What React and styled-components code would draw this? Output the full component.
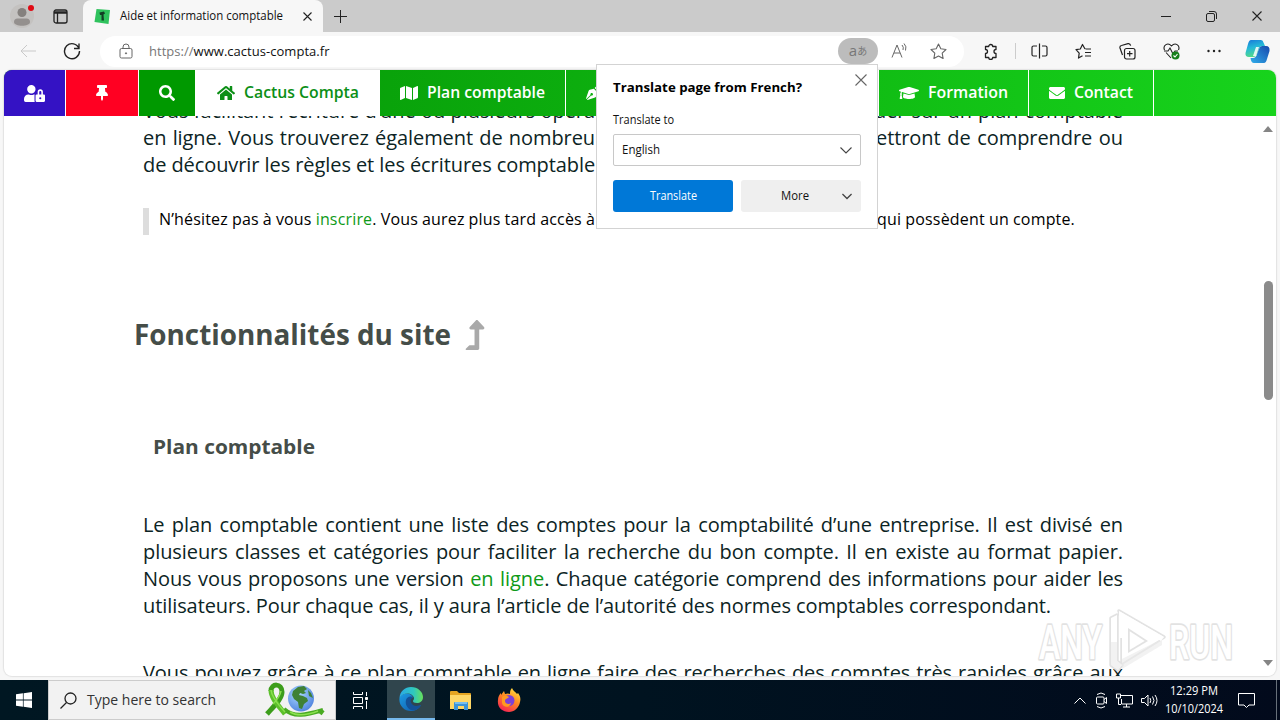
import styled, { createGlobalStyle } from 'styled-components'
import { FaUserLock, FaThumbtack, FaSearch, FaHome, FaMap, FaPenNib, FaGraduationCap, FaEnvelope, FaLevelUpAlt } from 'react-icons/fa'

export default function App() {
    return (
        <Desktop>
            <GlobalStyle />
            <TabStrip>
                <StripButton $width={44}><ProfileIcon /></StripButton>
                <StripButton $width={32}><TabActionsIcon /></StripButton>
                <Tab>
                    <Favicon />
                    <Label $width={163}>Aide et information comptable</Label>
                    <CrossIcon size={9} />
                </Tab>
                <NewTab><Icon w={13} h={13}><path d="M6.500 0v13M0 6.500h13" /></Icon></NewTab>
                <WindowControls>
                    <Icon w={10} h={10}><path d="M0 5.500h10" /></Icon>
                    <Icon w={11} h={11}><rect x=".5" y="2.500" width="8" height="8" rx="1.500" /><path d="M3 .5h5a2.500 2.500 0 0 1 2.500 2.500v5" /></Icon>
                    <CrossIcon size={10} />
                </WindowControls>
            </TabStrip>
            <Toolbar>
                <BackSlot><Icon w={16} h={14} color="#c9c9c9"><path d="M16 7H1M7 1L1 7l6 6" /></Icon></BackSlot>
                <ReloadSlot><Icon w={18} h={18} sw={1.4}><path d="M16 6.500A7.500 7.500 0 1 0 16.500 9M16 1.500v5h-5" /></Icon></ReloadSlot>
                <AddressBar>
                    <Icon w={14} h={16} color="#666"><rect x="1" y="5.500" width="12" height="9.500" rx="1.500" /><path d="M4 5.500V4a3 3 0 0 1 6 0v1.500" /><circle cx="7" cy="10.300" r=".6" fill="#666" /></Icon>
                    <Url><span>https://</span>www.cactus-compta.fr</Url>
                    <TranslatePill><span>a</span><small>あ</small></TranslatePill>
                    <ReadAloud><ReadAloudIcon /></ReadAloud>
                    <StarIcon />
                </AddressBar>
                <Tools>
                    <ExtensionsIcon />
                    <Divider />
                    <SplitIcon />
                    <FavoritesIcon />
                    <CollectionsIcon />
                    <HealthIcon />
                    <Icon w={14} h={4} color="none"><g fill="#222"><circle cx="1.500" cy="2" r="1.200" /><circle cx="7" cy="2" r="1.200" /><circle cx="12.500" cy="2" r="1.200" /></g></Icon>
                    <CopilotIcon />
                </Tools>
            </Toolbar>
            <PageFrame>
                <Page>
                    <SiteNav>
                        <NavItem $width={61} $bg="#3412c4"><FaUserLock size={21} /></NavItem>
                        <NavItem $width={72} $bg="#ff0022"><FaThumbtack size={16} /></NavItem>
                        <NavItem $width={56} $bg="#009900" $last><FaSearch size={16} /></NavItem>
                        <NavItem $width={185} $active $last><FaHome size={18} /><Label $width={115}>Cactus Compta</Label></NavItem>
                        <NavItem $width={185}><FaMap size={18} /><Label $width={118}>Plan comptable</Label></NavItem>
                        <NavItem $width={312} $start><FaPenNib size={14} /></NavItem>
                        <NavItem $width={149}><FaGraduationCap size={20} /><Label $width={80}>Formation</Label></NavItem>
                        <NavItem $width={124}><FaEnvelope size={16} /><Label $width={59}>Contact</Label></NavItem>
                    </SiteNav>
                    <Viewport>
                        <Article>
                            <Intro>
                                <SplitLine>
                                    <Chunk $width={452}>Vous facilitant l’écriture d’une ou plusieurs opéra</Chunk>
                                    <Chunk $width={249}>der sur un plan comptable</Chunk>
                                </SplitLine>
                                <SplitLine>
                                    <Chunk $width={452}>en ligne. Vous trouverez également de nombreu</Chunk>
                                    <Chunk $width={247}>ettront de comprendre ou</Chunk>
                                </SplitLine>
                                <SplitLine>
                                    <Chunk $width={452}>de découvrir les règles et les écritures comptable</Chunk>
                                </SplitLine>
                            </Intro>
                            <Quote>
                                <Chunk $width={436}>N’hésitez pas à vous <a>inscrire</a>. Vous aurez plus tard accès à</Chunk>
                                <Chunk $width={198}>qui possèdent un compte.</Chunk>
                            </Quote>
                            <Title><Label $width={317}>Fonctionnalités du site</Label><FaLevelUpAlt size={30} color="#a9a9a9" /></Title>
                            <Subtitle><Label $width={162}>Plan comptable</Label></Subtitle>
                            <Paragraph>
                                <Line>Le plan comptable contient une liste des comptes pour la comptabilité d’une entreprise. Il est divisé en</Line>
                                <Line>plusieurs classes et catégories pour faciliter la recherche du bon compte. Il en existe au format papier.</Line>
                                <Line>Nous vous proposons une version <a>en ligne</a>. Chaque catégorie comprend des informations pour aider les</Line>
                                <Line $width={908}>utilisateurs. Pour chaque cas, il y aura l’article de l’autorité des normes comptables correspondant.</Line>
                            </Paragraph>
                            <Paragraph>
                                <Line>Vous pouvez grâce à ce plan comptable en ligne faire des recherches des comptes très rapides grâce aux</Line>
                            </Paragraph>
                        </Article>
                        <Scrollbar>
                            <Arrow />
                            <Thumb />
                            <Arrow $down />
                        </Scrollbar>
                    </Viewport>
                </Page>
            </PageFrame>
            <Taskbar>
                <StartButton><Icon w={16} h={16} color="none"><path fill="#fff" d="M0 2.300l6.900-1v6.300H0zM7.600 1.200L16 0v7.600H7.600zM0 8.400h6.900v6.300L0 13.700zM7.600 8.400H16V16l-8.400-1.200z" /></Icon></StartButton>
                <SearchBox>
                    <Icon w={17} h={17} color="#222" sw={1.3}><circle cx="10.500" cy="6.500" r="5.500" /><path d="M6.500 10.500L.5 16.500" /></Icon>
                    <Label $width={129}>Type here to search</Label>
                    <RibbonIcon />
                </SearchBox>
                <TaskButton><TaskViewIcon /></TaskButton>
                <TaskButton $active><EdgeIcon /></TaskButton>
                <TaskButton><FolderIcon /></TaskButton>
                <TaskButton><FirefoxIcon /></TaskButton>
                <Tray>
                    <Icon w={12} h={7} color="#fff"><path d="M.5 6.500L6 1l5.500 5.500" /></Icon>
                    <CameraIcon />
                    <NetworkIcon />
                    <VolumeIcon />
                    <Clock><Label $width={48}>12:29 PM</Label><Label $width={58}>10/10/2024</Label></Clock>
                    <Icon w={17} h={17} color="#fff"><path d="M.5 1.500h16v11.500H11L8.500 15.500 6 13H.5z" /></Icon>
                    <ShowDesktop />
                </Tray>
            </Taskbar>
            <TranslatePopup>
                <PopupHead>
                    <Label $width={189}>Translate page from French?</Label>
                    <CrossIcon size={12} color="#666" />
                </PopupHead>
                <PopupLabel><Label $width={61}>Translate to</Label></PopupLabel>
                <Select><Label $width={38}>English</Label><Chevron /></Select>
                <PopupButtons>
                    <PrimaryButton><Label $width={47}>Translate</Label></PrimaryButton>
                    <MoreButton><Label $width={28}>More</Label><Chevron small /></MoreButton>
                </PopupButtons>
            </TranslatePopup>
            <Watermark />
        </Desktop>
    )
}

// Shared bits
function Icon({ w, h, color = '#222', sw = 1, children }) {
    return <svg width={w} height={h} viewBox={`0 0 ${w} ${h}`} fill="none" stroke={color} strokeWidth={sw}>{children}</svg>
}

// Text set to an exact run length, whatever the fallback face
function Label({ $width, children }) {
    return (
        <LabelBox $width={$width}>
            <LabelSvg>
                <text x="0" y="1em" textLength={$width} lengthAdjust="spacingAndGlyphs">{children}</text>
            </LabelSvg>
        </LabelBox>
    )
}

function CrossIcon({ size, color = '#222' }) {
    return <Icon w={size} h={size} color={color} sw={1.1}><path d={`M.5 .5L${size - 0.5} ${size - 0.5}M${size - 0.5} .5L.5 ${size - 0.5}`} /></Icon>
}

function Chevron({ small }) {
    return <svg width={small ? 10 : 12} height="7" viewBox="0 0 12 7" fill="none" stroke="#444" strokeWidth={small ? 1.6 : 1.1}><path d="M.5 .5L6 6l5.500-5.500" /></svg>
}

function ProfileIcon() {
    return (
        <svg width="26" height="26" viewBox="0 0 26 26">
            <circle cx="13" cy="13" r="12" fill="#c4c2c0" />
            <circle cx="13" cy="9.500" r="4.500" fill="#85817e" />
            <path d="M5 19q0-3.500 3.500-3.500h9q3.500 0 3.500 3.500c0 5-16 5-16 0" fill="#94908e" />
            <circle cx="22" cy="5" r="3" fill="#e00a14" />
        </svg>
    )
}

function TabActionsIcon() {
    return <Icon w={15} h={15} sw={1.3}><rect x="1" y="1" width="13" height="13" rx="2" /><path d="M1 3h13M1 4h13M4.500 4v10" /></Icon>
}

function Favicon() {
    return (
        <svg width="17" height="17" viewBox="0 0 17 17">
            <path d="M2.500 1l13.500 1-1.500 14-14-2z" fill="#2fc25d" />
            <path d="M5.500 4.500l4.500-1 1 2-1.500 1 .5 6H7.500V7L6 7z" fill="#123d24" />
        </svg>
    )
}

function ReadAloudIcon() {
    return <Icon w={17} h={16} color="#666"><path d="M1 14.500L6 2l5 12.500M3 10h6M11 2q2 2 1 5M13 .5q3 3 1.500 7" /></Icon>
}

function StarIcon() {
    return <Icon w={17} h={17} color="#666" sw={1.1}><path strokeLinejoin="round" d="M8.500 1l2.300 4.800 5.200.7-3.800 3.700.9 5.300-4.600-2.500-4.600 2.500.9-5.300L1 6.500l5.200-.7z" /></Icon>
}

function ExtensionsIcon() {
    return <Icon w={16} h={17} sw={1.3}><path strokeLinejoin="round" d="M2.500 3.500h3.200a2 2 0 0 1 4 0h3.300v3a1.900 1.900 0 0 0 0 4v4H9.700a2 2 0 0 1-4 0H2.500v-4a2 2 0 0 0 0-4z" /></Icon>
}

function SplitIcon() {
    return <Icon w={17} h={17} sw={1.2}><path d="M6 3H2.500A1.500 1.500 0 0 0 1 4.500v7A1.500 1.500 0 0 0 2.500 13H6M11 3h3.500A1.500 1.500 0 0 1 16 4.500v7a1.500 1.500 0 0 1-1.500 1.500H11M8.500 .5v15" /></Icon>
}

function FavoritesIcon() {
    return <Icon w={17} h={17} sw={1.2}><path strokeLinejoin="round" d="M10 6L7.500 1.500 5.300 6 1 6.700l3.200 3.400-.7 5 4-2.300M10.500 6H16M10 9.500h6M10 13h6" /></Icon>
}

function CollectionsIcon() {
    return <Icon w={17} h={17} sw={1.2}><rect x="5.500" y="5.500" width="10.500" height="10.500" rx="2" /><path d="M3.500 12L1 5Q.5 3 2.500 2.500L9 .7q2-.5 2.700 2M10.700 8v5.500M8 10.700h5.500" /></Icon>
}

function HealthIcon() {
    return (
        <Icon w={17} h={17} sw={1.1}>
            <path d="M1.500 7C-.5 2 5-1 8.500 3 12-1 17.500 2 15.500 7M3 9.500L8 15M1 8h4l2-3 3 6 2-3h3" />
            <circle cx="12.500" cy="12.500" r="4" fill="#16801b" stroke="none" />
            <path stroke="#fff" d="M10.500 12.500l1.500 1.500 2.500-3" />
        </Icon>
    )
}

function CopilotIcon() {
    return (
        <svg width="25" height="23" viewBox="0 0 25 23">
            <defs>
                <linearGradient id="cpA" x1="0" y1="0" x2=".3" y2="1"><stop stopColor="#1876d9" /><stop offset=".5" stopColor="#24b8d8" /><stop offset="1" stopColor="#52d98a" /></linearGradient>
                <linearGradient id="cpB" x1="0" y1="1" x2="1" y2="0"><stop stopColor="#30aeea" /><stop offset="1" stopColor="#1747ad" /></linearGradient>
            </defs>
            <path d="M6 0h10q2 0 2.700 3L20 6h-3q-2 0-3 3l-2 5q-1 3-4 3H4q-4 0-3.500-4L3 4q1-4 3-4" fill="url(#cpA)" />
            <path d="M19 23H9q-3 0-3.500-5H8q3 0 4-4l2-5q1-3 3-3h4q4 0 3.500 5L22 19q-1 4-3 4" fill="url(#cpB)" />
            <path d="M11 7h3l-3 9H8z" fill="#fff" opacity=".85" />
        </svg>
    )
}

function RibbonIcon() {
    return (
        <svg width="62" height="37" viewBox="0 0 62 37">
            <defs><radialGradient id="globe" cx=".4" cy=".35" r=".7"><stop stopColor="#a9d8ff" /><stop offset="1" stopColor="#4f82de" /></radialGradient></defs>
            <circle cx="37" cy="16.500" r="13" fill="url(#globe)" />
            <path fill="#3f8135" d="M29 9l5-4 6-1 3 3-3 2 2 2-3 1-3-1-1 2 4 1 4 2 1 3-4 3-2 5-3-1-1-6-4-3-2-4zM44 8l3 3 2 5-4-2z" />
            <g fill="none">
                <path stroke="#3c9d1b" strokeWidth="5" d="M3 32C9 25 18 17 18 10 18 1 7 1 7 9" />
                <path stroke="#5cc02b" strokeWidth="5" d="M7 8c0 8 7 15 14 24" />
                <path stroke="#49ab22" strokeWidth="4" d="M20 27c10 9 22 6 39 1M59 28l-3 4" />
                <path stroke="#8ae04f" strokeWidth="1.500" d="M7 8c1 9 9 16 14 22M17 9q-1 6-8 13M26 30q10 6 28-1" />
            </g>
        </svg>
    )
}

function TaskViewIcon() {
    return <Icon w={17} h={17} color="#fff"><path d="M1.500 0v2.500h9V0M1.500 17v-2.500h9V17M1.500 5.500h9v6h-9zM14.500 0v4M14.500 9v8" /><path fill="#fff" d="M13.500 5.500h2v2h-2z" /></Icon>
}

function EdgeIcon() {
    return (
        <svg width="24" height="24" viewBox="0 0 24 24">
            <defs>
                <linearGradient id="edA" x1="0" x2="1"><stop stopColor="#2aa9e8" /><stop offset=".6" stopColor="#2fc8be" /><stop offset="1" stopColor="#67e05a" /></linearGradient>
                <linearGradient id="edB" x1="0" x2="1" y2="1"><stop stopColor="#1c9ce4" /><stop offset="1" stopColor="#1057a8" /></linearGradient>
            </defs>
            <path fill="url(#edB)" d="M.5 11C3 5 13 5 14 11c-3-1-5 1-4 4 1 4 7 6 12 3-2 4-6 6-10 6C5 24-.5 18 .5 11" />
            <path fill="#145197" d="M7 13c1-3 5-5 7-2-4 1-3 7 3 8 2 0 4-1 5-1-2 4-6 6-10 5-4-2-6-6-5-10" />
            <path fill="url(#edA)" d="M.5 11C1 4 6 0 12 0c7 0 12 5 12 10 0 4-3 6-6 6-3 0-4-1-4-2s1-1 1-3C14 6 5 4 .5 11" />
        </svg>
    )
}

function FolderIcon() {
    return (
        <svg width="22" height="19" viewBox="0 0 22 19">
            <path fill="#e6a521" d="M0 1q0-1 1-1h6l2 2h11q1 0 1 1v4H0z" />
            <path fill="#ffd766" d="M0 4h21v14H0z" />
            <path fill="#3b93d8" d="M4 19v-7q0-1 1-1h12q1 0 1 1v7h-4v-4H8v4z" />
            <path fill="#75bdf0" d="M5 11h12v2H5z" />
        </svg>
    )
}

function FirefoxIcon() {
    return (
        <svg width="24" height="24" viewBox="0 0 24 24">
            <defs><linearGradient id="ff" x1=".8" y1="0" x2=".25" y2="1"><stop stopColor="#ffe342" /><stop offset=".45" stopColor="#ff8b22" /><stop offset="1" stopColor="#f52055" /></linearGradient></defs>
            <path fill="url(#ff)" d="M15 0c1 3 4 4 5 6l1-1c2 3 3 5 2 9-1 6-6 10-11 10C5 24 0 19 1 12c0-3 1-5 3-7v2l3-4 1 3q3-1 5 0c0-2 0-4 2-6" />
            <circle cx="12" cy="12.500" r="5.500" fill="#7c40d8" />
            <path fill="#ff9a20" d="M5 9c3-2 5-1 7 0-1 2-4 1-4 4 0 3 4 4 6 2-1 5-8 5-9 0z" />
        </svg>
    )
}

function CameraIcon() {
    return <Icon w={14} h={17} color="#fff"><rect x="2.500" y="5" width="7.500" height="7" rx="1" /><path d="M10 7.500l2.500-2v6l-2.500-2M3 2.500q4-3 8 0M3 14.500q4 3 8 0" /></Icon>
}

function NetworkIcon() {
    return <Icon w={17} h={15} color="#fff"><path d="M5 2.500h11.500v8.500h-11V6M7 14h7M10.500 11v3M.5 1h4v4h-4zM2.500 5v6.500H5" /></Icon>
}

function VolumeIcon() {
    return <Icon w={17} h={15} color="#fff"><path d="M.5 5.500h3L7 2v11L3.500 9.500h-3zM9 5q1.500 2.500 0 5M11.500 3.500q3 4 0 8M14 2q4 5.500 0 11" /></Icon>
}

function Watermark() {
    return (
        <WatermarkSvg viewBox="0 0 204 66">
            <g fill="#fff" stroke="#dedede" strokeWidth="3.500" strokeLinejoin="round" paintOrder="stroke">
                <text x="4" y="51" textLength="63" lengthAdjust="spacingAndGlyphs">ANY</text>
                <text x="134" y="51" textLength="64" lengthAdjust="spacingAndGlyphs">RUN</text>
                <path d="M76 10l6-3v46l5 4-4 5-7-5zM84 3l45 26-42 26V11zM93 20v25l20-12z" fillRule="evenodd" />
            </g>
            <g fill="#e6e6e6" fillOpacity=".6">
                <path d="M87 51l40-20v6L87 61z" />
                <path d="M76 34h6v19l5 4-4 5-7-5z" />
            </g>
            <path fill="#fff" d="M84 3l45 26-3 4L89 12v18h-5z" />
        </WatermarkSvg>
    )
}

const GlobalStyle = createGlobalStyle`
    body {
        margin: 0;
        overflow: hidden;
    }

    * {
        box-sizing: border-box;
    }

    svg {
        flex: none;
    }
`

const Desktop = styled.div`
    background: #f7f7f7;
    color: #111;
    display: flex;
    flex-direction: column;
    font: 12px/16px "Open Sans", "Noto Sans CJK JP", sans-serif;
    height: 720px;
    position: relative;
    width: 1280px;
`

const LabelBox = styled.span`
    display: block;
    flex: none;
    height: 1.35em;
    line-height: 1;
    width: ${({ $width }) => $width}px;
`

const LabelSvg = styled.svg`
    display: block;
    fill: currentColor;
    height: 1.35em;
    overflow: visible;
    width: 100%;
`

// Browser chrome
const TabStrip = styled.div`
    align-items: center;
    background: #cbcbcb;
    display: flex;
    height: 32px;
`

const StripButton = styled.div`
    display: flex;
    justify-content: center;
    width: ${({ $width }) => $width}px;
`

const Tab = styled.div`
    align-items: center;
    background: #f7f7f7;
    border-radius: 8px 8px 0 0;
    display: flex;
    gap: 9px;
    height: 32px;
    margin-left: 7px;
    padding-left: 11px;
    width: 240px;

    > svg:last-child {
        margin-left: 11px;
    }
`

const NewTab = styled.div`
    display: flex;
    margin-left: 11px;
`

const WindowControls = styled.div`
    align-items: center;
    display: flex;
    gap: 35px;
    margin-left: auto;
    padding-right: 18px;
`

const Toolbar = styled.div`
    align-items: center;
    display: flex;
    height: 38px;
`

const BackSlot = styled.div`
    display: flex;
    margin-left: 20px;
    width: 43px;
`

const ReloadSlot = styled.div`
    display: flex;
    width: 37px;
`

const AddressBar = styled.div`
    align-items: center;
    background: #fff;
    border-radius: 16px;
    display: flex;
    height: 31px;
    padding-left: 19px;
    width: 864px;
`

const Url = styled.div`
    font-size: 13px;
    flex: 1;
    letter-spacing: 0.03px;
    margin-left: 16px;

    span {
        color: #777;
    }
`

const TranslatePill = styled.div`
    align-items: center;
    background: #bcbcbc;
    border-radius: 14px;
    color: #777;
    display: flex;
    font-size: 15px;
    height: 26px;
    justify-content: center;
    width: 40px;

    span {
        margin-top: -2px;
    }

    small {
        font-size: 10px;
        margin-top: -1px;
    }
`

const ReadAloud = styled.div`
    display: flex;
    margin: 0 22px 0 13px;

    + svg {
        margin-right: 17px;
    }
`

const Tools = styled.div`
    align-items: center;
    display: flex;
    gap: 27px;
    margin-left: 19px;

    > svg:last-child {
        margin-left: -3px;
    }
`

const Divider = styled.i`
    background: #ccc;
    height: 16px;
    margin: 0 -12px 0 -11px;
    width: 1px;
`

// Web page
const PageFrame = styled.div`
    height: 610px;
    padding: 0 4px 4px;
`

const Page = styled.main`
    background: #fff;
    border-radius: 8px;
    box-shadow: 0 0 1px 1px #e2e2e2;
    height: 606px;
    overflow: hidden;
`

const SiteNav = styled.nav`
    background: linear-gradient(90deg, #059505 10%, #17d31c);
    color: #fff;
    display: flex;
    font-size: 16px;
    font-weight: 600;
    height: 46px;
`

const NavItem = styled.div`
    align-items: center;
    background: ${({ $bg, $active }) => $active ? '#fff' : $bg || 'transparent'};
    border-right: ${({ $last }) => $last ? 0 : '1px solid #fff'};
    box-sizing: content-box;
    color: ${({ $active }) => $active ? '#0c8f16' : '#fff'};
    display: flex;
    gap: 9px;
    height: 46px;
    justify-content: ${({ $start }) => $start ? 'flex-start' : 'center'};
    width: ${({ $width }) => $width}px;

    > svg:only-child {
        margin-left: ${({ $start }) => $start ? 20 : 0}px;
    }
`

const Viewport = styled.div`
    display: flex;
    height: 560px;
    justify-content: space-between;
    overflow: hidden;
`

const Article = styled.article`
    color: #0c2424;
    font-size: 20px;
    letter-spacing: -0.08px;
    line-height: 27px;
    margin: -19px 0 0 139px;
    width: 980px;

    a {
        color: #0e9a18;
    }
`

const Intro = styled.div`
    height: 81px;
`

const SplitLine = styled.div`
    display: flex;
    justify-content: space-between;
`

const Chunk = styled.span`
    text-align: justify;
    text-align-last: justify;
    white-space: nowrap;
    width: ${({ $width }) => $width}px;
`

const Quote = styled.blockquote`
    border-left: 6px solid #ddd;
    color: #000;
    display: flex;
    font-size: 16px;
    height: 27px;
    justify-content: space-between;
    letter-spacing: 0.17px;
    line-height: 23px;
    margin: 30px 0 0;
    padding: 0 48px 0 10px;
    word-spacing: -0.5px;
`

const Title = styled.h2`
    align-items: center;
    color: #454d48;
    display: flex;
    font-size: 28px;
    gap: 9px;
    height: 40px;
    letter-spacing: 0;
    margin: 80px 0 0 -9px;

    > span {
        margin-top: 2px;
    }
`

const Subtitle = styled.h3`
    color: #454d48;
    font-size: 20px;
    height: 27px;
    letter-spacing: 0;
    margin: 79px 0 50px 10px;
`

const Paragraph = styled.div`
    margin-bottom: 40px;
`

const Line = styled.div`
    text-align: justify;
    text-align-last: justify;
    white-space: nowrap;
    width: ${({ $width }) => $width || 980}px;
`

const Scrollbar = styled.div`
    align-items: center;
    display: flex;
    flex-direction: column;
    justify-content: space-between;
    padding: 10px 3px 10px 0;
    width: 13px;
`

const Arrow = styled.i`
    border: 5px solid transparent;
    border-${({ $down }) => $down ? 'top' : 'bottom'}: 6px solid #858585;
    border-${({ $down }) => $down ? 'bottom' : 'top'}: 0;
`

const Thumb = styled.i`
    background: #8b8b8b;
    border-radius: 5px;
    height: 119px;
    margin-bottom: 112px;
    width: 9px;
`

// Translate popup
const TranslatePopup = styled.aside`
    background: #fff;
    border: 1px solid #d3d3d3;
    height: 165px;
    left: 596px;
    padding: 8px 16px;
    position: absolute;
    top: 64px;
    width: 282px;
`

const PopupHead = styled.div`
    color: #000;
    display: flex;
    font-size: 13px;
    font-weight: 700;
    height: 39px;
    justify-content: space-between;
    margin-right: -6px;

    > span {
        margin-top: 6px;
    }

    > svg {
        margin-top: 1px;
    }
`

const PopupLabel = styled.div`
    height: 22px;
`

const Select = styled.div`
    align-items: center;
    border: 1px solid #c8c8c8;
    border-radius: 2px;
    display: flex;
    height: 32px;
    justify-content: space-between;
    padding: 0 8px;
`

const PopupButtons = styled.div`
    display: flex;
    gap: 8px;
    margin-top: 14px;
`

const PrimaryButton = styled.div`
    align-items: center;
    background: #0078d7;
    border-radius: 3px;
    color: #fff;
    display: flex;
    height: 32px;
    justify-content: center;
    width: 120px;
`

const MoreButton = styled(PrimaryButton)`
    background: #efefef;
    color: #111;
    gap: 33px;
    justify-content: flex-end;
    padding-right: 9px;
`

// Taskbar
const Taskbar = styled.footer`
    background: linear-gradient(90deg, #001722, #001320 50%, #020a1c);
    color: #fff;
    display: flex;
    height: 40px;
`

const StartButton = styled.div`
    align-items: center;
    display: flex;
    justify-content: center;
    width: 48px;
`

const SearchBox = styled.div`
    align-items: center;
    background: #f2f2f2;
    border: 1px solid #ccc;
    color: #333;
    display: flex;
    font-size: 15px;
    gap: 10px;
    padding-left: 11px;
    width: 288px;

    > span {
        margin-top: 1px;
    }

    > svg:last-child {
        margin-left: 38px;
    }
`

const TaskButton = styled.div`
    align-items: center;
    background: ${({ $active }) => $active ? '#30454d' : 'transparent'};
    border-bottom: ${({ $active }) => $active ? '2px solid #76b9ed' : 0};
    display: flex;
    justify-content: center;
    width: 48px;

    &:nth-child(3) {
        margin-right: 3px;
    }

    &:nth-child(n + 5) {
        padding-left: 3px;
    }
`

const Tray = styled.div`
    align-items: center;
    display: flex;
    gap: 8px;
    margin-left: auto;
`

const Clock = styled.div`
    align-items: center;
    display: flex;
    flex-direction: column;
    gap: 2px;
    margin: 0 7px 0 -1px;
`

const ShowDesktop = styled.i`
    border-left: 1px solid #67707a;
    height: 40px;
    margin-left: 13px;
    width: 4px;
`

const WatermarkSvg = styled.svg`
    font: 500 48px "Roboto", sans-serif;
    height: 66px;
    left: 1035px;
    opacity: 0.85;
    position: absolute;
    top: 608px;
    width: 204px;
`
